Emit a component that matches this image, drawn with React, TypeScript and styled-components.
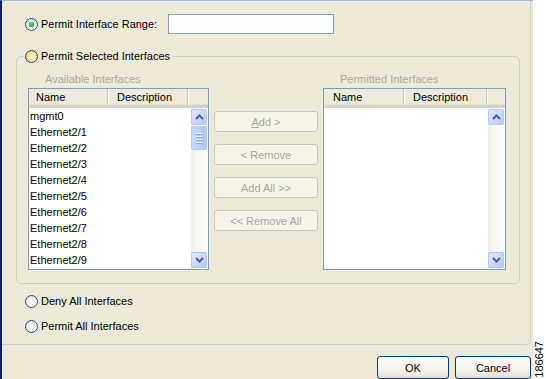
import React from "react";
import styled, { createGlobalStyle, css } from "styled-components";

const GlobalStyle = createGlobalStyle`
  html, body { margin: 0; padding: 0; background: #ffffff; }
  body { font-family: "Liberation Sans", Arial, sans-serif; font-size: 11px; color: #000; }
  * { box-sizing: border-box; }
`;

const Page = styled.div`
  display: flex;
  width: 546px;
  height: 379px;
  overflow: hidden;
  background: #ffffff;
`;

const Dialog = styled.div`
  width: 533px;
  height: 379px;
  display: flex;
  flex-direction: column;
  background: #ece9d8;
  border-left: 2px solid #0b1e6e;
  border-top: 1px solid #a9bbe4;
`;

const Panel = styled.div`
  height: 345px;
  margin-right: 2px;
  padding-top: 13px;
  border-right: 1px solid #d0cfc0;
  border-bottom: 1px solid #d0cfc0;
  border-bottom-right-radius: 5px;
  display: flex;
  flex-direction: column;
`;

const RangeRow = styled.div`
  display: flex;
  align-items: center;
  padding-left: 23px;
  height: 20px;
`;

const RadioCircle = styled.span<{ $checked?: boolean; $hot?: boolean }>`
  position: relative;
  flex: none;
  width: 13px;
  height: 13px;
  border-radius: 50%;
  border: 1px solid #1c5180;
  background: radial-gradient(circle at 65% 65%, #ffffff 0%, #f3f2ec 45%, #d6d5ce 100%);
  ${(p) =>
    p.$hot &&
    css`
      background: radial-gradient(circle at 55% 55%, #fff8e4 0%, #fde5a6 45%, #f5b83a 80%);
    `}
  ${(p) =>
    p.$checked &&
    css`
      &::after {
        content: "";
        position: absolute;
        left: 3px;
        top: 3px;
        width: 5px;
        height: 5px;
        border-radius: 50%;
        background: radial-gradient(circle at 40% 40%, #6fd66f 0%, #21a121 60%, #1a7d1a 100%);
      }
    `}
`;

const RadioLabel = styled.span`
  margin-left: 3px;
  white-space: nowrap;
  line-height: 13px;
`;

const TextInput = styled.div`
  margin-left: 11px;
  width: 166px;
  height: 20px;
  border: 1px solid #7f9db9;
  background: #ffffff;
`;

const Group = styled.fieldset`
  margin: 15px 0 0 14px;
  width: 504px;
  padding: 0 13px 13px 11px;
  border: 1px solid #d0d0bf;
  border-radius: 5px;
  min-width: 0;
`;

const Legend = styled.legend`
  display: flex;
  align-items: center;
  padding: 0 3px 0 0;
  margin-left: -3px;
  height: 14px;
`;

const GroupBody = styled.div`
  display: flex;
  align-items: flex-start;
  padding-top: 10px;
`;

const ListColumn = styled.div<{ $w: number }>`
  width: ${(p) => p.$w}px;
  display: flex;
  flex-direction: column;
`;

const ListCaption = styled.div`
  color: #aca899;
  padding-left: 17px;
  height: 13px;
  line-height: 13px;
  margin-bottom: 2px;
  white-space: nowrap;
`;

const Table = styled.div`
  height: 182px;
  border: 1px solid #7f9db9;
  background: #ffffff;
  display: flex;
  flex-direction: column;
`;

const Header = styled.div`
  height: 19px;
  flex: none;
  display: flex;
  background: #ebeadb;
  border-bottom: 3px solid #d6d3c4;
  box-shadow: inset 0 -1px 0 #e3e0d0;
`;

const HeaderCell = styled.div<{ $w: number }>`
  width: ${(p) => p.$w}px;
  flex: none;
  display: flex;
  align-items: center;
  padding-left: ${(p) => (p.$w > 79 ? 9 : 7)}px;
  border-right: 1px solid #c7c5b2;
  box-shadow: 1px 0 0 #ffffff;
  white-space: nowrap;
`;

const Body = styled.div`
  flex: 1;
  display: flex;
  min-height: 0;
`;

const Rows = styled.div`
  flex: 1;
  display: flex;
  flex-direction: column;
  overflow: hidden;
`;

const Row = styled.div`
  height: 16px;
  line-height: 16px;
  padding-left: 1px;
  white-space: nowrap;
`;

const ScrollBar = styled.div`
  width: 17px;
  flex: none;
  display: flex;
  flex-direction: column;
  background: linear-gradient(90deg, #eeede5 0%, #f7f6f1 30%, #fcfcfa 100%);
  padding: 1px 1px 1px 0;
`;

const ScrollButton = styled.div`
  height: 16px;
  flex: none;
  display: flex;
  align-items: center;
  justify-content: center;
  border: 1px solid #b5c8f3;
  border-radius: 2px;
  background: linear-gradient(135deg, #dfe8fe 0%, #c5d6fc 60%, #b4c8f6 100%);
`;

const Thumb = styled.div`
  height: 24px;
  margin-top: 1px;
  flex: none;
  display: flex;
  flex-direction: column;
  align-items: center;
  justify-content: center;
  gap: 1px;
  border: 1px solid #b5c8f3;
  border-radius: 2px;
  background: linear-gradient(90deg, #c9d8fc 0%, #bccffb 60%, #aec4f6 100%);
`;

const Grip = styled.span`
  width: 6px;
  height: 1px;
  background: #eef3ff;
  box-shadow: 0 1px 0 #8ca6dc;
  margin-bottom: 1px;
`;

const Spacer = styled.div`
  flex: 1;
`;

const ButtonColumn = styled.div`
  width: 104px;
  margin: 0 5px;
  padding-top: 38px;
  display: flex;
  flex-direction: column;
  gap: 12px;
`;

const DisabledButton = styled.div`
  height: 21px;
  display: flex;
  align-items: center;
  justify-content: center;
  border: 1px solid #c9c7ba;
  border-radius: 3px;
  background: #f5f4ea;
  color: #aca899;
  white-space: nowrap;
  u { text-decoration: underline; }
`;

const RadioList = styled.div`
  display: flex;
  flex-direction: column;
  padding-left: 23px;
  margin-top: 11px;
  gap: 12px;
`;

const RadioRow = styled.div`
  display: flex;
  align-items: center;
  height: 13px;
`;

const Footer = styled.div`
  display: flex;
  justify-content: flex-end;
  gap: 6px;
  padding: 11px 2px 0 0;
`;

const PushButton = styled.div<{ $w: number }>`
  width: ${(p) => p.$w}px;
  height: 23px;
  display: flex;
  align-items: center;
  justify-content: center;
  border: 1px solid #003c74;
  border-radius: 3px;
  background: linear-gradient(180deg, #ffffff 0%, #f5f4ef 60%, #e3e1d7 100%);
`;

const Side = styled.div`
  flex: 1;
  display: flex;
  flex-direction: column;
  justify-content: flex-end;
  align-items: center;
  padding-bottom: 1px;
`;

const Code = styled.div`
  writing-mode: vertical-rl;
  transform: rotate(180deg);
  font-family: "Liberation Sans", Arial, sans-serif;
  font-size: 11px;
  line-height: 11px;
  color: #000;
`;

const Chevron: React.FC<{ down?: boolean }> = ({ down }) => (
  <svg width="9" height="6" viewBox="0 0 9 6">
    <path
      d={down ? "M1 1 L4.5 4.5 L8 1" : "M1 5 L4.5 1.5 L8 5"}
      fill="none"
      stroke="#4d6185"
      strokeWidth="2"
    />
  </svg>
);

const ListTable: React.FC<{ rows: string[]; thumb?: boolean; nameW: number; descW: number }> = ({
  rows,
  thumb,
  nameW,
  descW,
}) => (
  <Table>
    <Header>
      <HeaderCell $w={nameW}>Name</HeaderCell>
      <HeaderCell $w={descW}>Description</HeaderCell>
    </Header>
    <Body>
      <Rows>
        {rows.map((r) => (
          <Row key={r}>{r}</Row>
        ))}
      </Rows>
      <ScrollBar>
        <ScrollButton>
          <Chevron />
        </ScrollButton>
        {thumb && (
          <Thumb>
            <Grip />
            <Grip />
            <Grip />
            <Grip />
          </Thumb>
        )}
        <Spacer />
        <ScrollButton>
          <Chevron down />
        </ScrollButton>
      </ScrollBar>
    </Body>
  </Table>
);

const available = [
  "mgmt0",
  "Ethernet2/1",
  "Ethernet2/2",
  "Ethernet2/3",
  "Ethernet2/4",
  "Ethernet2/5",
  "Ethernet2/6",
  "Ethernet2/7",
  "Ethernet2/8",
  "Ethernet2/9",
];

export default function App() {
  return (
    <Page>
      <GlobalStyle />
      <Dialog>
        <Panel>
          <RangeRow>
            <RadioCircle $checked />
            <RadioLabel>Permit Interface Range:</RadioLabel>
            <TextInput />
          </RangeRow>
          <Group>
            <Legend>
              <RadioCircle $hot />
              <RadioLabel>Permit Selected Interfaces</RadioLabel>
            </Legend>
            <GroupBody>
              <ListColumn $w={181}>
                <ListCaption>Available Interfaces</ListCaption>
                <ListTable rows={available} thumb nameW={79} descW={80} />
              </ListColumn>
              <ButtonColumn>
                <DisabledButton>
                  <span>
                    <u>A</u>dd &gt;
                  </span>
                </DisabledButton>
                <DisabledButton>&lt; Remove</DisabledButton>
                <DisabledButton>Add All &gt;&gt;</DisabledButton>
                <DisabledButton>&lt;&lt; Remove All</DisabledButton>
              </ButtonColumn>
              <ListColumn $w={183}>
                <ListCaption>Permitted Interfaces</ListCaption>
                <ListTable rows={[]} nameW={80} descW={83} />
              </ListColumn>
            </GroupBody>
          </Group>
          <RadioList>
            <RadioRow>
              <RadioCircle />
              <RadioLabel>Deny All Interfaces</RadioLabel>
            </RadioRow>
            <RadioRow>
              <RadioCircle />
              <RadioLabel>Permit All Interfaces</RadioLabel>
            </RadioRow>
          </RadioList>
        </Panel>
        <Footer>
          <PushButton $w={72}>OK</PushButton>
          <PushButton $w={76}>Cancel</PushButton>
        </Footer>
      </Dialog>
      <Side>
        <Code>186647</Code>
      </Side>
    </Page>
  );
}
